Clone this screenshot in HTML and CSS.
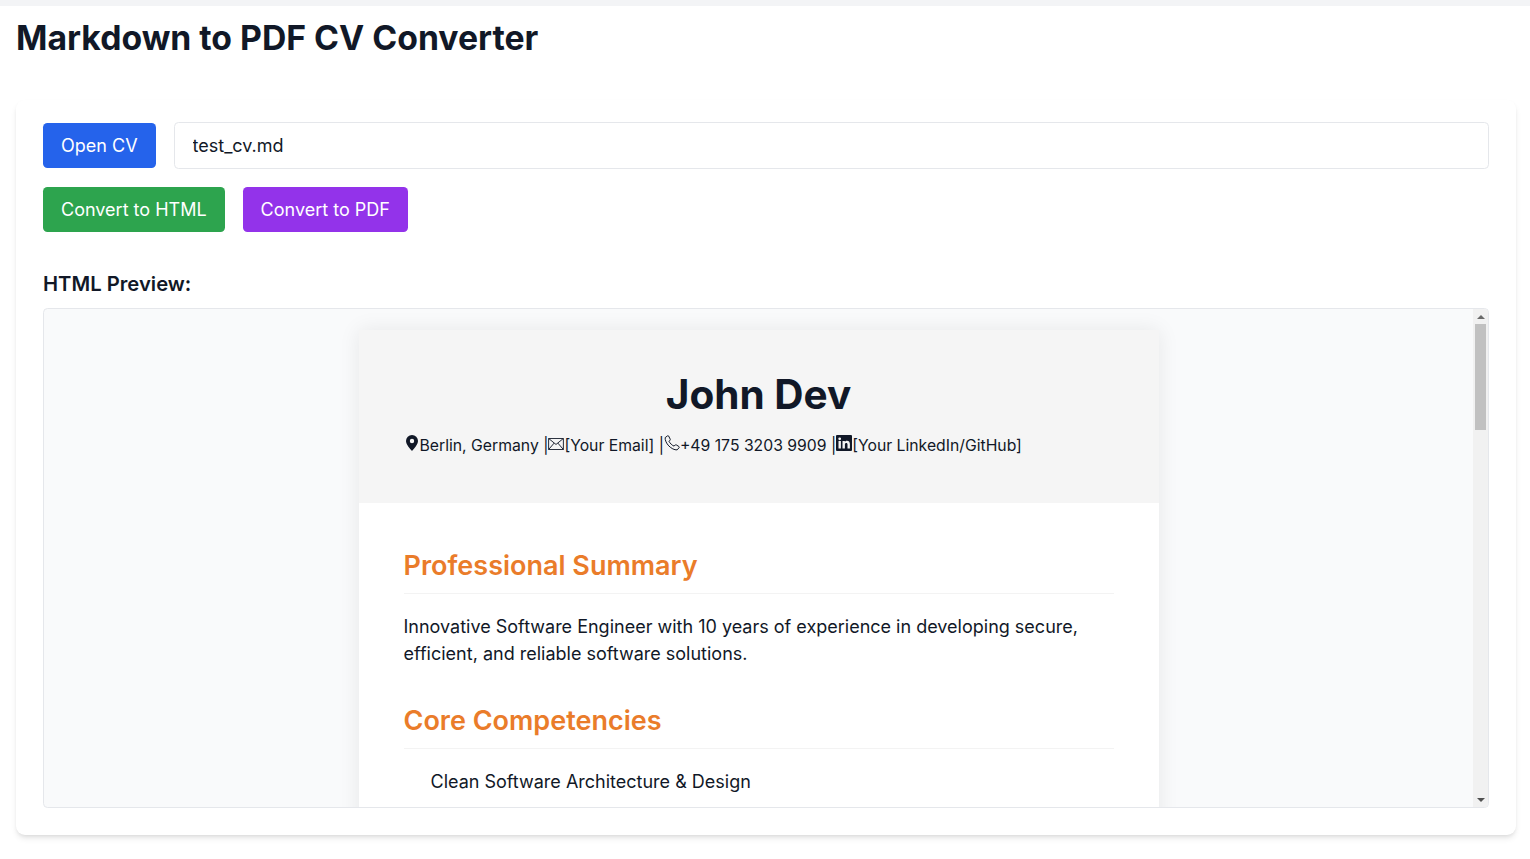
FILE: index.html
```html
<!DOCTYPE html>
<html>

<head>
    <title>Markdown to PDF CV Converter</title>
    <link rel="stylesheet" href="styles.css">
</head>

<body>
    <div class="page">
        <h1 class="title">Markdown to PDF CV Converter</h1>

        <div class="card">
            <div class="file-row">
                <button class="btn btn-blue">Open CV</button>
                <input class="file-name" type="text" value="test_cv.md" readonly>
            </div>
            <div class="action-row">
                <button class="btn btn-green">Convert to HTML</button>
                <button class="btn btn-purple">Convert to PDF</button>
            </div>

            <h2 class="preview-label">HTML Preview:</h2>
            <div class="preview">
                <div class="preview-view">
                    <div class="sheet">
                        <header class="cv-head">
                            <h1 class="cv-name">John Dev</h1>
                            <p class="contact">
                                <svg class="ico ico-pin" viewBox="0 0 12 16"><path fill-rule="evenodd" d="M6 0a6 6 0 0 0-6 6c0 3.6 4 7.600 6 10 2-2.400 6-6.400 6-10a6 6 0 0 0-6-6zm0 3.800a2.200 2.200 0 1 1 0 4.400 2.200 2.200 0 0 1 0-4.400z"/></svg>Berlin, Germany |<svg class="ico ico-mail" viewBox="0 0 17 13"><path d="M.5.5h16v12H.5zM.5.5l8 6.500 8-6.500M.5 12.500l6-7M16.500 12.500l-6-7"/></svg>[Your Email] |<svg class="ico ico-phone" viewBox="0 0 16 16"><path d="M3.600.8 1.200 2.600C.8 5 2.500 8.500 4.800 10.900c2.400 2.400 5.600 4.200 8.300 4l2-2.200c.3-.4.200-.9-.2-1.200l-2.600-1.600c-.4-.2-.8-.2-1.100.1l-1.100 1.100C8.400 10.700 5.700 8 5 6.300l1-1.100c.3-.3.400-.8.200-1.100L4.600 1c-.2-.4-.7-.5-1-.2z"/></svg>+49 175 3203 9909 |<svg class="ico ico-in" viewBox="0 0 16 16"><path fill-rule="evenodd" d="M1 0h14a1 1 0 0 1 1 1v14a1 1 0 0 1-1 1H1a1 1 0 0 1-1-1V1a1 1 0 0 1 1-1zm1.500 6v7.500h2.400V6zm1.200-3.600a1.400 1.400 0 1 0 0 2.800 1.400 1.400 0 0 0 0-2.800zM6.500 6v7.500h2.400V9.600c0-1 .5-1.700 1.400-1.700.8 0 1.200.6 1.200 1.700v3.900h2.400V9.100c0-2.100-1.100-3.300-2.900-3.300-1 0-1.700.5-2.100 1.100V6z"/></svg>[Your LinkedIn/GitHub]
                            </p>
                        </header>
                        <div class="cv-body">
                            <section class="cv-section">
                                <h2 class="cv-heading">Professional Summary</h2>
                                <p>Innovative Software Engineer with 10 years of experience in developing secure, efficient, and reliable software solutions.</p>
                            </section>
                            <section class="cv-section">
                                <h2 class="cv-heading">Core Competencies</h2>
                                <ul class="cv-list">
                                    <li>Clean Software Architecture &amp; Design</li>
                                </ul>
                            </section>
                        </div>
                    </div>
                </div>
                <div class="scrollbar">
                    <div class="scroll-btn"><span class="arrow-up"></span></div>
                    <div class="scroll-track"><div class="scroll-thumb"></div></div>
                    <div class="scroll-btn"><span class="arrow-down"></span></div>
                </div>
            </div>
        </div>
    </div>
</body>

</html>
```

FILE: styles.css
```css
* {
    box-sizing: border-box;
}

html {
    font-size: 18px;
}

body {
    margin: 0;
    font-family: Inter, "Liberation Sans", sans-serif;
    color: #111827;
    background-color: #fff;
    overflow: hidden;
}

.page {
    height: 859px;
    padding: 6px 14px 0 16px;
    background: linear-gradient(#f3f4f6 6px, #fff 6px);
}

.title {
    margin: 0;
    height: 94px;
    padding-top: 9px;
    font-size: 1.875rem;
    line-height: 46px;
    font-weight: 700;
}

.card {
    height: 735px;
    padding: 22px 27px 27px;
    border-radius: 9px;
    background-color: #fff;
    box-shadow: 0 4px 6px -1px rgba(0, 0, 0, 0.1), 0 2px 4px -2px rgba(0, 0, 0, 0.1);
}

.file-row {
    display: flex;
    align-items: center;
    gap: 18px;
}

.action-row {
    display: flex;
    gap: 18px;
    margin-top: 18px;
}

.btn {
    height: 45px;
    padding: 0 18px;
    border: none;
    border-radius: 4.5px;
    font-family: inherit;
    font-size: 18px;
    color: #fff;
    cursor: pointer;
}

.btn-blue {
    background-color: #2563eb;
}

.btn-green {
    background-color: #2da44e;
}

.btn-purple {
    background-color: #9333ea;
}

.file-name {
    flex: 1;
    height: 47px;
    padding: 0 18px;
    border: 1px solid #e5e7eb;
    border-radius: 4.5px;
    font-family: inherit;
    font-size: 18px;
    color: #111827;
}

.preview-label {
    margin: 38px 0 10px;
    font-size: 1.125rem;
    line-height: 28px;
    font-weight: 600;
}

.preview {
    display: flex;
    height: 500px;
    overflow: hidden;
    border: 1px solid #e5e7eb;
    border-radius: 4.5px;
    background-color: #f9fafb;
}

.preview-view {
    flex: 1;
    padding-top: 21px;
    overflow: hidden;
}

.scrollbar {
    display: flex;
    flex-direction: column;
    width: 15px;
    background-color: #f1f1f1;
}

.scroll-btn {
    display: flex;
    align-items: center;
    justify-content: center;
    height: 15px;
}

.arrow-up {
    border-left: 4px solid transparent;
    border-right: 4px solid transparent;
    border-bottom: 4px solid #6a6a6a;
}

.arrow-down {
    border-left: 4px solid transparent;
    border-right: 4px solid transparent;
    border-top: 4px solid #505050;
}

.scroll-track {
    flex: 1;
}

.scroll-thumb {
    width: 11px;
    height: 106px;
    margin-left: 2px;
    background-color: #c1c1c1;
}

.sheet {
    width: 800px;
    min-height: 2170px;
    margin: 0 auto;
    background-color: #fff;
    box-shadow: 0 0 20px rgba(0, 0, 0, 0.08);
}

.cv-head {
    height: 173px;
    padding: 41px 45px 0;
    background-color: #f5f5f5;
}

.cv-name {
    margin: 0;
    text-align: center;
    font-size: 2.25rem;
    line-height: 48px;
    font-weight: 700;
}

.contact {
    margin: 15px 0 0;
    font-size: 0.875rem;
    line-height: 24px;
    white-space: nowrap;
}

.ico {
    display: inline-block;
    fill: #111827;
}

.ico-pin {
    width: 12px;
    height: 16px;
    margin: 0 2px;
}

.ico-mail {
    width: 16px;
    height: 12px;
    vertical-align: 1px;
    fill: none;
    stroke: #111827;
}

.ico-phone {
    width: 16px;
    height: 16px;
    fill: none;
    stroke: #111827;
}

.ico-in {
    width: 16px;
    height: 16px;
}

.cv-body {
    padding: 45px;
    font-size: 18px;
    line-height: 27px;
}

.cv-section {
    margin-bottom: 36px;
}

.cv-section p {
    margin: 0 0 16px;
}

.cv-heading {
    margin: 0 0 19px;
    padding-bottom: 9px;
    border-bottom: 1px solid #f3f3f3;
    font-size: 1.5rem;
    line-height: 36px;
    font-weight: 600;
    color: #ea7c2a;
}

.cv-list {
    margin: 0 0 16px;
    padding-left: 27px;
    list-style: none;
}
```
